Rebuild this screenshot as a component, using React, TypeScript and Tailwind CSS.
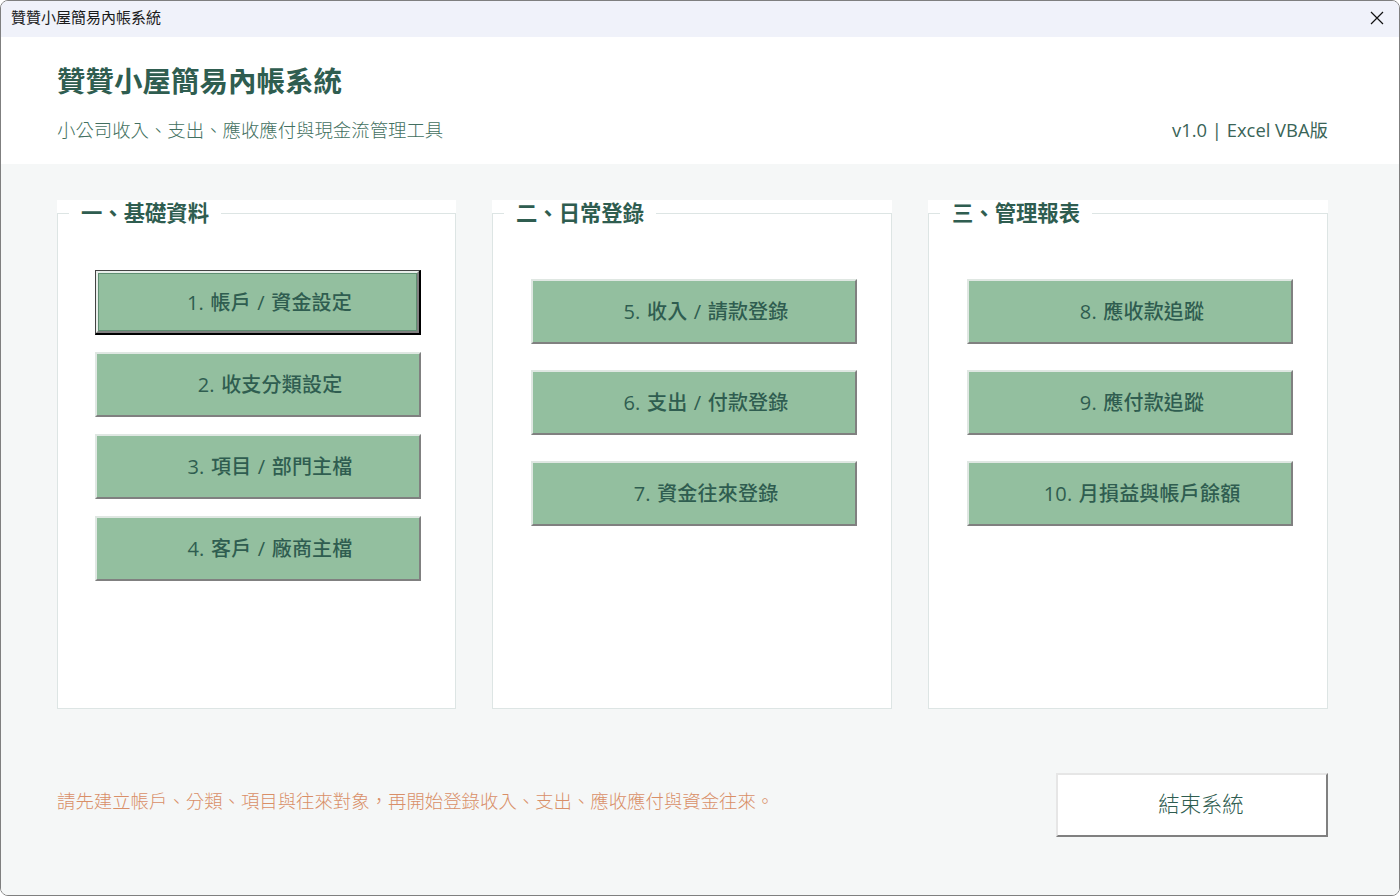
const FONT = "font-['Open_Sans','Noto_Sans_CJK_TC',sans-serif]";

const groups = [
  {
    title: "一、基礎資料",
    tight: true,
    items: ["1. 帳戶 / 資金設定", "2. 收支分類設定", "3. 項目 / 部門主檔", "4. 客戶 / 廠商主檔"],
  },
  {
    title: "二、日常登錄",
    tight: false,
    items: ["5. 收入 / 請款登錄", "6. 支出 / 付款登錄", "7. 資金往來登錄"],
  },
  {
    title: "三、管理報表",
    tight: false,
    items: ["8. 應收款追蹤", "9. 應付款追蹤", "10. 月損益與帳戶餘額"],
  },
];

function MenuButton({ label, focused }: { label: string; focused?: boolean }) {
  if (focused) {
    // focused button: black frame, then the normal bevel, then a thin inner line
    return (
      <div className="h-[65px] w-[326px] border border-r-2 border-b-2 border-t-[#444] border-l-[#444] border-r-black border-b-black">
        <div className="h-full border-2 border-t-[#e8eeea] border-l-[#e8eeea] border-r-[#808080] border-b-[#808080]">
          <div className="h-full bg-[#93bf9f] border border-[#5f8f72] flex items-center justify-center pl-6 pt-[1px] text-[20px] font-medium tracking-[0.2px] [word-spacing:1px] text-[#2f5d50]">
            {label}
          </div>
        </div>
      </div>
    );
  }
  return (
    <div className="h-[65px] w-[326px] bg-[#93bf9f] border-2 border-t-[#dfe7e2] border-l-[#dfe7e2] border-r-[#808080] border-b-[#808080] flex items-center justify-center pl-6 pt-[1px] text-[20px] font-medium tracking-[0.2px] [word-spacing:1px] text-[#2f5d50]">
      {label}
    </div>
  );
}

function Panel({ title, tight, items }: { title: string; tight: boolean; items: string[] }) {
  return (
    <div className="relative bg-white pt-[13px]">
      <div className={`h-[496px] border border-[#dde5e4] flex flex-col ${tight ? "pl-[37px] pt-[56px] gap-[17px]" : "pl-[38px] pt-[65px] gap-[26px]"}`}>
        {items.map((item, i) => (
          <MenuButton key={item} label={item} focused={tight && i === 0} />
        ))}
      </div>
      <div className="absolute left-3 top-0 h-[27px] bg-white px-3 pb-[2px] flex items-center text-[21.33px] font-semibold text-[#2f5d50] leading-none">
        {title}
      </div>
    </div>
  );
}

export default function App() {
  return (
    <div lang="zh-TW" className={`h-[896px] w-[1400px] bg-white ${FONT}`}>
      <div className="h-full flex flex-col border border-[#7f7f7f] rounded-lg overflow-hidden">
        {/* Title bar */}
        <div className="h-[36px] shrink-0 bg-[#f0f2fa] flex items-center justify-between pl-[10px] pr-[15px] pb-[2px] text-[15px] text-[#1a1a1a]">
          <span className="pb-[2px]">贊贊小屋簡易內帳系統</span>
          <svg width="14" height="14" viewBox="0 0 14 14" fill="none" stroke="#111" strokeWidth="1.2">
            <path d="M1 1l12 12M13 1L1 13" />
          </svg>
        </div>

        {/* Header */}
        <div className="h-[127px] shrink-0 bg-white pl-14 pr-[71px] flex flex-col">
          <div className="pt-[24px] text-[28.5px] font-semibold leading-[40px] text-[#2f5d50]">贊贊小屋簡易內帳系統</div>
          <div className="mt-[16px] flex items-center justify-between text-[18.4px] leading-[26px] font-light text-[#426f60]">
            <span>小公司收入、支出、應收應付與現金流管理工具</span>
            <span className="font-normal text-[#3a6457]">v1.0 | Excel VBA版</span>
          </div>
        </div>

        {/* Body */}
        <div className="flex-1 bg-[#f5f7f7] pl-14 pr-[71px] pt-9 flex flex-col">
          <div className="grid grid-cols-[399px_400px_400px] gap-[36px]">
            {groups.map((g) => (
              <Panel key={g.title} title={g.title} tight={g.tight} items={g.items} />
            ))}
          </div>
          <div className="mt-[64px] flex items-center justify-between">
            <span className="pb-[8px] text-[18.4px] font-light text-[#d98f68]">請先建立帳戶、分類、項目與往來對象，再開始登錄收入、支出、應收應付與資金往來。</span>
            <div className="h-[64px] w-[272px] bg-white border-2 border-t-[#e6e6e6] border-l-[#e6e6e6] border-r-[#808080] border-b-[#808080] flex items-center justify-center pl-[18px] pb-[3px] text-[21.33px] font-light text-[#2f5d50]">
              結束系統
            </div>
          </div>
        </div>
      </div>
    </div>
  );
}
